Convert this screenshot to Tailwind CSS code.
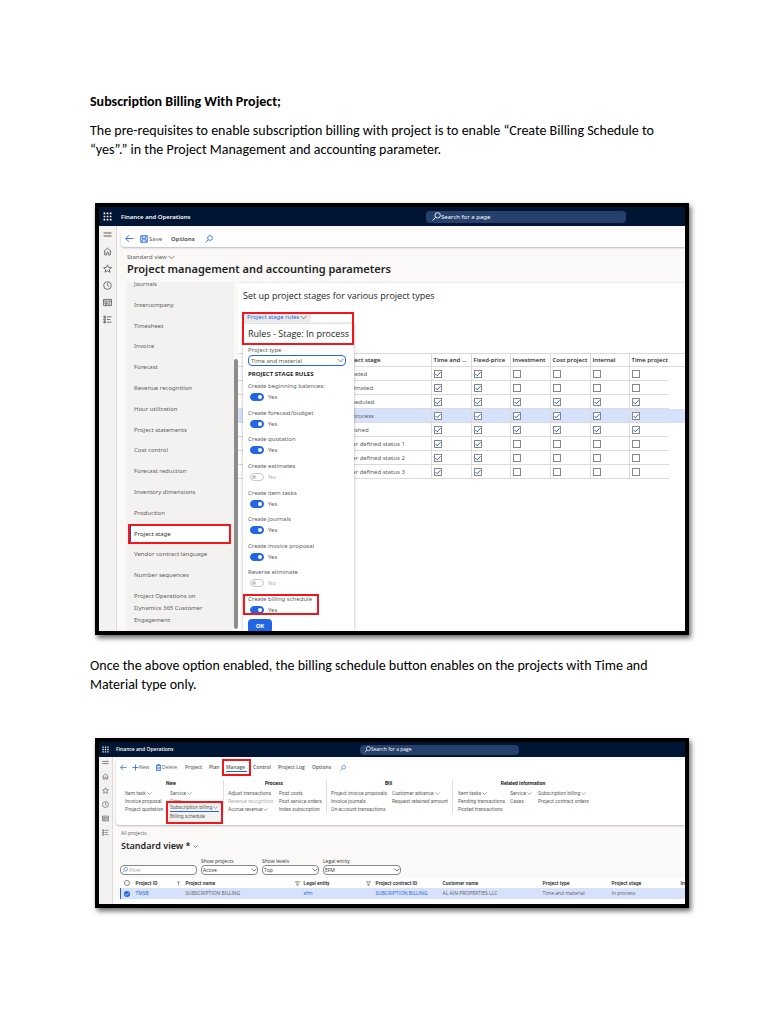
<!DOCTYPE html>
<html lang="en">
  <head>
    <meta charset="UTF-8" />
    <meta name="viewport" content="width=device-width, initial-scale=1.0" />
    <title>Subscription Billing With Project</title>
    <script src="https://cdn.jsdelivr.net/npm/@tailwindcss/browser@4"></script>
  </head>
  <body class="bg-white text-black font-['Carlito','Lato',sans-serif]">
    <!-- icon set -->
    <svg class="hidden">
      <symbol id="waffle" viewBox="0 0 16 16" fill="currentColor">
        <path d="M1 1h3v3H1zM6.500 1h3v3h-3zM12 1h3v3h-3zM1 6.500h3v3H1zM6.500 6.500h3v3h-3zM12 6.500h3v3h-3zM1 12h3v3H1zM6.500 12h3v3h-3zM12 12h3v3h-3z" />
      </symbol>
      <symbol id="menu" viewBox="0 0 16 16" fill="none" stroke="currentColor"><path d="M1 5.500h14M1 10.500h14" stroke-width="1.800" /></symbol>
      <symbol id="home" viewBox="0 0 16 16" fill="none" stroke="currentColor"><path d="M1.500 8L8 2l6.500 6M3 7v7h3.500v-3.500a1.500 1.500 0 013 0V14H13V7" stroke-width="1.500" /></symbol>
      <symbol id="star" viewBox="0 0 16 16" fill="none" stroke="currentColor"><path d="M8 1.500l2 4.600 5 .4-3.800 3.300 1.200 4.900L8 12.100l-4.400 2.600 1.200-4.900L1 6.500l5-.4z" stroke-width="1.500" /></symbol>
      <symbol id="clock" viewBox="0 0 16 16" fill="none" stroke="currentColor"><circle cx="8" cy="8" r="6.800" stroke-width="1.500" /><path d="M8 3.500V8l3 2" stroke-width="1.500" /></symbol>
      <symbol id="workspace" viewBox="0 0 16 16" fill="none" stroke="currentColor"><path d="M1 2.500h14v11H1zM1 5.500h14M3.500 8.500h4v2.500h-4zM9.500 8.500H13M9.500 11H13" stroke-width="1.500" /></symbol>
      <symbol id="modules" viewBox="0 0 16 16" fill="none" stroke="currentColor"><path d="M1.500 2h3v2.500h-3zM1.500 6.800h3v2.500h-3zM1.500 11.500h3V14h-3zM7 3.200h8M7 8h6M7 12.800h8" stroke-width="1.500" /></symbol>
      <symbol id="back" viewBox="0 0 16 16" fill="none" stroke="currentColor"><path d="M15 8H1.500M7 2L1.500 8 7 14" stroke-width="1.600" /></symbol>
      <symbol id="save" viewBox="0 0 16 16" fill="none" stroke="currentColor"><path d="M1.500 1.500h13v13h-13zM4.500 1.500v5h7v-5M4 14.500v-5h8v5" stroke-width="1.800" /></symbol>
      <symbol id="search" viewBox="0 0 16 16" fill="none" stroke="currentColor"><circle cx="10" cy="6" r="4.800" stroke-width="1.600" /><path d="M6.500 9.500L1 15" stroke-width="1.600" /></symbol>
      <symbol id="down" viewBox="0 0 16 16" fill="none" stroke="currentColor"><path d="M1.500 4.500L8 11l6.500-6.500" stroke-width="1.800" /></symbol>
      <symbol id="plus" viewBox="0 0 16 16" fill="none" stroke="currentColor"><path d="M8 1v14M1 8h14" stroke-width="1.800" /></symbol>
      <symbol id="trash" viewBox="0 0 16 16" fill="none" stroke="currentColor"><path d="M2 3.500h12M6 3V1h4v2M3.500 4v11h9V4M6.500 6.500v6M9.500 6.500v6" stroke-width="1.800" /></symbol>
      <symbol id="funnel" viewBox="0 0 16 16" fill="none" stroke="currentColor"><path d="M1.500 2h13L10 8v6H6V8z" stroke-width="1.500" /></symbol>
      <symbol id="up" viewBox="0 0 16 16" fill="none" stroke="currentColor"><path d="M8 15V1.500M4 5.500l4-4 4 4" stroke-width="1.500" /></symbol>
      <symbol id="tick" viewBox="0 0 16 16" fill="none" stroke="currentColor"><path d="M3 8l3.500 3.500L13 4.500" stroke-width="2" /></symbol>
    </svg>

    <main class="pt-[92px] pl-[90px] pr-[79px] pb-12">
      <h1 class="text-[14px] leading-[19px] font-bold">Subscription Billing With Project;</h1>
      <p class="mt-[10px] mr-4 text-[14px] leading-[19px]">
        The pre-requisites to enable subscription billing with project is to enable “Create Billing Schedule to “yes”.” in the Project Management and accounting parameter.
      </p>

      <!-- parameters form -->
      <figure class="mt-[44px] ml-[5px] border-4 border-black shadow-[2px_3px_5px_rgba(0,0,0,0.6)] font-['Noto_Sans',sans-serif] text-[6px] leading-[8px] text-[#605e5c] overflow-hidden">
        <header class="h-[19px] bg-[#001433] text-white flex items-center">
          <svg class="size-[9px] ml-1"><use href="#waffle" /></svg>
          <span class="ml-[9px] flex-1 font-semibold">Finance and Operations</span>
          <label class="w-[200px] h-3 mr-[59px] pl-[6px] rounded-sm bg-[#25406b] flex items-center">
            <svg class="size-[9px]"><use href="#search" /></svg>
            <input type="search" placeholder="Search for a page" aria-label="Search for a page" class="flex-1 min-w-0 outline-none placeholder:text-white placeholder:opacity-100" />
          </label>
        </header>
        <div class="flex h-[405px]">
          <aside class="w-[18px] shrink-0 bg-[#f3f2f1] border-r border-[#dddbd9] pt-[4px] flex flex-col items-center gap-2">
            <svg class="size-[9px]"><use href="#menu" /></svg>
            <svg class="size-[9px]"><use href="#home" /></svg>
            <svg class="size-[9px]"><use href="#star" /></svg>
            <svg class="size-[9px]"><use href="#clock" /></svg>
            <svg class="size-[9px]"><use href="#workspace" /></svg>
            <svg class="size-[9px]"><use href="#modules" /></svg>
          </aside>
          <div class="flex-1 min-w-0 bg-[#faf9f8] flex flex-col">
            <div class="ml-1 mt-[4px] h-[17px] shrink-0 rounded-l bg-white shadow-[0_1px_2px_rgba(0,0,0,0.25)] flex items-center">
              <button class="ml-[4px] text-[#2266e3]" aria-label="Back"><svg class="size-[9px]"><use href="#back" /></svg></button>
              <button class="ml-[6px] flex items-center gap-px"><svg class="size-[8px] text-[#2266e3]"><use href="#save" /></svg>Save</button>
              <button class="ml-[9px] font-bold">Options</button>
              <button class="ml-[10px] text-[#2266e3]" aria-label="Search"><svg class="size-[8px]"><use href="#search" /></svg></button>
            </div>
            <button class="ml-[10px] mt-[6px] flex items-center gap-px">Standard view <svg class="size-[7px]"><use href="#down" /></svg></button>
            <h2 class="ml-[10px] text-[11px] leading-[15px] font-semibold text-[#252423]">Project management and accounting parameters</h2>
            <div class="mt-[6px] ml-[9px] flex flex-1 min-h-0">
              <nav class="w-[108px] bg-[#f3f2f1] overflow-hidden flex flex-col justify-between pb-[5px]" aria-label="Parameter pages">
                <a href="#" class="pl-2 -mt-[2px]">Journals</a>
                <a href="#" class="pl-2">Intercompany</a>
                <a href="#" class="pl-2">Timesheet</a>
                <a href="#" class="pl-2">Invoice</a>
                <a href="#" class="pl-2">Forecast</a>
                <a href="#" class="pl-2">Revenue recognition</a>
                <a href="#" class="pl-2">Hour utilization</a>
                <a href="#" class="pl-2">Project statements</a>
                <a href="#" class="pl-2">Cost control</a>
                <a href="#" class="pl-2">Forecast reduction</a>
                <a href="#" class="pl-2">Inventory dimensions</a>
                <a href="#" class="pl-2">Production</a>
                <a href="#" class="-my-1 ml-1 mr-[5px] py-1 pl-[3px] bg-white text-[#323130] border-l border-[#2a43c9] outline-2 outline-[#f5161c]">Project stage</a>
                <a href="#" class="pl-2">Vendor contract language</a>
                <a href="#" class="pl-2">Number sequences</a>
                <a href="#" class="pl-2 -mt-[2px] w-24 leading-[12px]">Project Operations on Dynamics 365 Customer Engagement</a>
              </nav>
              <div class="w-[4px] mt-[77px] mb-[2px] rounded bg-[#8f8d8b]"></div>
              <section class="relative flex-1 min-w-0 bg-white border-t border-[#edebe9]">
                <h3 class="ml-[5px] mt-[7px] font-['Open_Sans'] text-[9px] leading-[12px] text-[#252423]">Set up project stages for various project types</h3>
                <button class="ml-[5px] mt-[10px] px-1 h-[10px] bg-[#edebe9] text-[#2266e3] flex items-center gap-px">Project stage rules <svg class="size-[7px] text-[#605e5c]"><use href="#down" /></svg></button>
                <table class="mt-[31px] w-full table-fixed text-left border-t border-[#dddbd9] whitespace-nowrap">
                  <thead class="font-['Open_Sans'] text-[#252423]">
                    <tr class="h-[13px] border-b border-[#dddbd9]">
                      <th class="pl-[105px] font-semibold">Project stage</th>
                      <th class="w-[40px] pl-[2px] border-l border-[#dddbd9] font-semibold">Time and ...</th>
                      <th class="w-[39px] pl-[2px] border-l border-[#dddbd9] font-semibold">Fixed-price</th>
                      <th class="w-[40px] pl-[2px] border-l border-[#dddbd9] font-semibold">Investment</th>
                      <th class="w-[40px] pl-[2px] border-l border-[#dddbd9] font-semibold">Cost project</th>
                      <th class="w-[39px] pl-[2px] border-l border-[#dddbd9] font-semibold">Internal</th>
                      <th class="w-[40px] pl-[2px] border-l border-[#dddbd9] font-semibold">Time project</th>
                      <th class="w-[16px]"></th>
                    </tr>
                  </thead>
                  <tbody id="stages"></tbody>
                </table>

                <!-- drop dialog -->
                <form class="absolute left-[5px] top-[41px] bottom-0 w-[111px] bg-white shadow-[0_0_3px_rgba(0,0,0,0.3)] px-[5px] overflow-hidden">
                  <h4 class="mt-[4px] font-['Open_Sans'] text-[9px] leading-[12px] text-[#252423] whitespace-nowrap">Rules - Stage: In process</h4>
                  <label for="type" class="block mt-[6px]">Project type</label>
                  <div class="relative mr-[3px] mt-px">
                    <select id="type" class="block w-full h-[11px] pl-[2px] appearance-none rounded-sm border border-[#2266e3]"><option>Time and material</option></select>
                    <svg class="absolute right-[2px] top-[2px] size-[7px] pointer-events-none"><use href="#down" /></svg>
                  </div>
                  <h5 class="mt-[4px] font-['Open_Sans'] font-bold text-[#252423]">PROJECT STAGE RULES</h5>
                  <div id="rules" class="mt-[4px] h-[232px] flex flex-col justify-between"></div>
                  <button type="button" class="mt-[5px] w-[24px] h-[14px] rounded-sm bg-[#2266e3] text-white font-bold">OK</button>
                </form>
                <div class="absolute left-[4px] top-[29px] w-[112px] h-[33px] border-2 border-[#f5161c] pointer-events-none"></div>
              </section>
            </div>
          </div>
        </div>
      </figure>

      <p class="mt-[21px] mr-4 text-[14px] leading-[19px]">
        Once the above option enabled, the billing schedule button enables on the projects with Time and Material type only.
      </p>

      <!-- project list -->
      <figure class="mt-[44px] ml-[5px] border-4 border-black shadow-[2px_3px_5px_rgba(0,0,0,0.6)] font-['Open_Sans',sans-serif] text-[5px] leading-[7px] text-[#605e5c] overflow-hidden">
        <header class="h-[15px] bg-[#001433] text-white flex items-center">
          <svg class="size-[7px] ml-[3px]"><use href="#waffle" /></svg>
          <span class="ml-[7px] flex-1 font-semibold">Finance and Operations</span>
          <label class="w-[159px] h-[10px] mr-[166px] pl-1 rounded-sm bg-[#25406b] flex items-center">
            <svg class="size-[7px]"><use href="#search" /></svg>
            <input type="search" placeholder="Search for a page" aria-label="Search for a page" class="flex-1 min-w-0 outline-none placeholder:text-white placeholder:opacity-100" />
          </label>
        </header>
        <div class="flex">
          <aside class="w-[14px] shrink-0 bg-[#f3f2f1] border-r border-[#dddbd9] pt-[2px] flex flex-col items-center gap-[7px]">
            <svg class="size-[7px]"><use href="#menu" /></svg>
            <svg class="size-[7px]"><use href="#home" /></svg>
            <svg class="size-[7px]"><use href="#star" /></svg>
            <svg class="size-[7px]"><use href="#clock" /></svg>
            <svg class="size-[7px]"><use href="#workspace" /></svg>
            <svg class="size-[7px]"><use href="#modules" /></svg>
          </aside>
          <div class="flex-1 min-w-0 bg-[#faf9f8]">
            <div class="ml-[3px] mt-[3px] h-[65px] rounded-l bg-white shadow-[0_1px_2px_rgba(0,0,0,0.25)] whitespace-nowrap">
              <div class="flex items-center h-[15px] pl-1 font-semibold">
                <button class="w-[12px] text-[#2266e3]" aria-label="Back"><svg class="size-[7px]"><use href="#back" /></svg></button>
                <button class="w-[23px] flex items-center font-normal"><svg class="size-[7px] text-[#2266e3]"><use href="#plus" /></svg>New</button>
                <button class="w-[30px] flex items-center font-normal"><svg class="size-[7px] text-[#2266e3]"><use href="#trash" /></svg>Delete</button>
                <button class="w-[24px] text-left">Project</button>
                <button class="w-[17px] text-left">Plan</button>
                <button class="w-[21px] h-[9px] text-left border-b border-[#2266e3] outline-2 outline-offset-2 outline-[#f5161c]">Manage</button>
                <button class="ml-[6px] w-[25px] text-left">Control</button>
                <button class="w-[34px] text-left">Project Log</button>
                <button class="w-[28px] text-left">Options</button>
                <button class="text-[#2266e3]" aria-label="Search"><svg class="size-[6px]"><use href="#search" /></svg></button>
              </div>
              <div class="flex mt-[5px] font-['Roboto']">
                <div class="w-[107px] shrink-0 pl-[9px]">
                  <h4 class="pr-[6px] text-center font-bold text-[#252423]">New</h4>
                  <div class="mt-[2px] flex leading-[8px]">
                    <div class="w-[45px]">
                      <a href="#" class="flex items-center gap-px">Item task <svg class="size-[5px]"><use href="#down" /></svg></a>
                      <a href="#" class="block">Invoice proposal</a>
                      <a href="#" class="block">Project quotation</a>
                    </div>
                    <div class="relative">
                      <a href="#" class="flex items-center gap-px">Service <svg class="size-[5px]"><use href="#down" /></svg></a>
                      <a href="#" class="block">Case</a>
                      <div class="absolute -left-[4px] top-[12px] w-[57px] h-[23px] px-[2px] border-2 border-[#f5161c] bg-[#f3f2f1]">
                        <button class="flex w-full items-center gap-px border-b border-[#2266e3] leading-[8px]">Subscription billing <svg class="size-[5px]"><use href="#down" /></svg></button>
                        <a href="#" class="block">Billing schedule</a>
                      </div>
                    </div>
                  </div>
                </div>
                <div class="w-[103px] shrink-0 pl-[4px] border-l border-[#e1dfdd]">
                  <h4 class="pr-[6px] text-center font-bold text-[#252423]">Process</h4>
                  <div class="mt-[2px] flex leading-[8px]">
                    <div class="w-[51px]">
                      <a href="#" class="block">Adjust transactions</a>
                      <a href="#" class="block text-[#b3b0ad]">Revenue recognition</a>
                      <a href="#" class="flex items-center gap-px">Accrue revenue <svg class="size-[5px]"><use href="#down" /></svg></a>
                    </div>
                    <div>
                      <a href="#" class="block">Post costs</a>
                      <a href="#" class="block">Post service orders</a>
                      <a href="#" class="block">Index subscription</a>
                    </div>
                  </div>
                </div>
                <div class="w-[126px] shrink-0 pl-[4px] border-l border-[#e1dfdd]">
                  <h4 class="pr-[6px] text-center font-bold text-[#252423]">Bill</h4>
                  <div class="mt-[2px] flex leading-[8px]">
                    <div class="w-[61px]">
                      <a href="#" class="block">Project invoice proposals</a>
                      <a href="#" class="block">Invoice journals</a>
                      <a href="#" class="block">On-account transactions</a>
                    </div>
                    <div>
                      <a href="#" class="flex items-center gap-px">Customer advance <svg class="size-[5px]"><use href="#down" /></svg></a>
                      <a href="#" class="block">Request retained amount</a>
                    </div>
                  </div>
                </div>
                <div class="w-[136px] shrink-0 pl-[5px] border-l border-[#e1dfdd]">
                  <h4 class="text-center font-bold text-[#252423]">Related information</h4>
                  <div class="mt-[2px] flex leading-[8px]">
                    <div class="w-[52px] shrink-0">
                      <a href="#" class="flex items-center gap-px">Item tasks <svg class="size-[5px]"><use href="#down" /></svg></a>
                      <a href="#" class="block">Pending transactions</a>
                      <a href="#" class="block">Posted transactions</a>
                    </div>
                    <div class="w-[28px] shrink-0">
                      <a href="#" class="flex items-center gap-px">Service <svg class="size-[5px]"><use href="#down" /></svg></a>
                      <a href="#" class="block">Cases</a>
                    </div>
                    <div>
                      <a href="#" class="flex items-center gap-px">Subscription billing <svg class="size-[5px]"><use href="#down" /></svg></a>
                      <a href="#" class="block">Project contract orders</a>
                    </div>
                  </div>
                </div>
              </div>
            </div>

            <p class="ml-[8px] mt-[5px]">All projects</p>
            <h2 class="ml-[8px] mt-[3px] font-['Noto_Sans'] text-[9px] leading-[12px] font-semibold text-[#252423] flex items-center gap-[2px]">Standard view * <svg class="size-[5px]"><use href="#down" /></svg></h2>
            <div class="ml-[7px] mt-[6px] flex items-end gap-1 text-[#323130]">
              <label class="w-[77px] h-[10px] pl-px flex items-center rounded-sm border border-[#8a8886] bg-white">
                <svg class="size-[6px] text-[#2266e3]"><use href="#search" /></svg>
                <input type="text" placeholder="Filter" aria-label="Filter" class="flex-1 min-w-0 pl-px outline-none" />
              </label>
              <div class="relative w-[57px]">
                <label for="show" class="block">Show projects</label>
                <select id="show" class="block w-full h-[10px] pl-px appearance-none rounded-sm border border-[#8a8886] bg-white"><option>Active</option></select>
                <svg class="absolute right-px bottom-[2px] size-[6px] pointer-events-none"><use href="#down" /></svg>
              </div>
              <div class="relative w-[57px]">
                <label for="levels" class="block">Show levels</label>
                <select id="levels" class="block w-full h-[10px] pl-px appearance-none rounded-sm border border-[#8a8886] bg-white"><option>Top</option></select>
                <svg class="absolute right-px bottom-[2px] size-[6px] pointer-events-none"><use href="#down" /></svg>
              </div>
              <div class="relative w-[78px]">
                <label for="entity" class="block">Legal entity</label>
                <select id="entity" class="block w-full h-[10px] pl-px appearance-none rounded-sm border border-[#8a8886] bg-white"><option>EFM</option></select>
                <svg class="absolute right-px bottom-[2px] size-[6px] pointer-events-none"><use href="#down" /></svg>
              </div>
            </div>
            <div class="ml-[7px] mt-[3px] pb-[5px] bg-white overflow-hidden">
              <table class="w-full table-fixed text-left whitespace-nowrap">
                <thead class="font-['Roboto'] text-[#323130]">
                  <tr class="h-[10px]">
                    <th class="w-[15px] pl-[3px]"><input type="checkbox" aria-label="Select all" class="block size-[6px] appearance-none rounded-full border border-[#8a8886]" /></th>
                    <th class="w-[50px] font-semibold"><span class="flex items-center justify-between pr-[5px]">Project ID <svg class="size-[5px]"><use href="#up" /></svg></span></th>
                    <th class="w-[118px] font-semibold"><span class="flex items-center justify-between pr-[4px]">Project name <svg class="size-[5px]"><use href="#funnel" /></svg></span></th>
                    <th class="w-[72px] font-semibold"><span class="flex items-center justify-between pr-[5px]">Legal entity <svg class="size-[5px]"><use href="#funnel" /></svg></span></th>
                    <th class="w-[67px] font-semibold">Project contract ID</th>
                    <th class="w-[100px] font-semibold">Customer name</th>
                    <th class="w-[69px] font-semibold">Project type</th>
                    <th class="w-[69px] font-semibold">Project stage</th>
                    <th class="font-semibold">Int</th>
                  </tr>
                </thead>
                <tbody>
                  <tr class="h-[11px] bg-[#d6e1fb]">
                    <td class="pl-[3px] border-l border-[#2266e3]">
                      <label class="relative block size-[6px]">
                        <input type="checkbox" checked aria-label="Select TMSB" class="block size-[6px] appearance-none rounded-full bg-[#2266e3]" />
                        <svg class="absolute inset-0 size-[6px] text-white"><use href="#tick" /></svg>
                      </label>
                    </td>
                    <td><a href="#" class="text-[#2266e3]">TMSB</a></td>
                    <td>SUBSCRIPTION BILLING</td>
                    <td><a href="#" class="text-[#2266e3]">efm</a></td>
                    <td><a href="#" class="text-[#2266e3]">SUBCRIPTION BILLING</a></td>
                    <td>AL AIN PROPERTIES LLC</td>
                    <td>Time and material</td>
                    <td>In process</td>
                    <td></td>
                  </tr>
                </tbody>
              </table>
            </div>
          </div>
        </div>
      </figure>
    </main>

    <script>
      const stages = [
        ['Created', '110000'],
        ['Estimated', '110000'],
        ['Scheduled', '111111'],
        ['In process', '111111'],
        ['Finished', '111111'],
        ['User defined status 1', '110000'],
        ['User defined status 2', '110000'],
        ['User defined status 3', '110000'],
      ];
      const cell = (name, on) => `
        <td class="pl-[2px] border-l border-b border-[#dddbd9]">
          <label class="relative block size-[8px]">
            <input type="checkbox" aria-label="${name}" ${on === '1' ? 'checked' : ''} class="peer block size-[8px] appearance-none border border-[#8a8886] bg-white" />
            <svg class="absolute inset-0 size-[8px] hidden peer-checked:block text-[#2266e3]"><use href="#tick" /></svg>
          </label>
        </td>`;
      document.getElementById('stages').innerHTML = stages
        .map(([name, flags]) => `
          <tr class="h-[14px] ${name === 'In process' ? 'bg-[#d6e1fb]' : ''}">
            <td class="pl-[107px] border-b border-[#dddbd9]">${name}</td>${[...flags].map((f) => cell(name, f)).join('')}
            <td></td>
          </tr>`)
        .join('');

      const rules = [
        ['Create beginning balances:', true],
        ['Create forecast/budget', true],
        ['Create quotation', true],
        ['Create estimates', false],
        ['Create item tasks', true],
        ['Create journals', true],
        ['Create invoice proposal', true],
        ['Reverse eliminate', false],
        ['Create billing schedule', true],
      ];
      document.getElementById('rules').innerHTML = rules
        .map(([name, on]) => `
          <label class="block whitespace-nowrap ${name === 'Create billing schedule' ? '-ml-1 pl-1 w-[74px] outline-2 -outline-offset-1 outline-[#f5161c]' : ''}">
            <span class="block">${name}</span>
            <span class="mt-[3px] flex items-center gap-1 ${on ? '' : 'text-[#b3b0ad]'}">
              <input type="checkbox" role="switch" ${on ? 'checked' : 'disabled'} class="ml-[2px] w-[14px] h-[8px] appearance-none rounded-full border border-[#c8c6c4] before:block before:size-[4px] before:mt-px before:ml-px before:rounded-full before:bg-[#c8c6c4] checked:border-[#2266e3] checked:bg-[#2266e3] checked:before:ml-[7px] checked:before:bg-white" />
              ${on ? 'Yes' : 'No'}
            </span>
          </label>`)
        .join('');
    </script>
  </body>
</html>
